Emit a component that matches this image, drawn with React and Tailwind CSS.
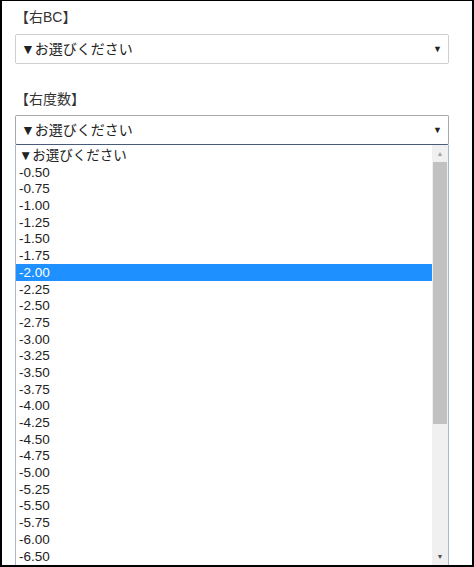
import React from 'react';

const options = [
  '▼お選びください',
  '-0.50', '-0.75', '-1.00', '-1.25', '-1.50', '-1.75', '-2.00', '-2.25', '-2.50',
  '-2.75', '-3.00', '-3.25', '-3.50', '-3.75', '-4.00', '-4.25', '-4.50', '-4.75',
  '-5.00', '-5.25', '-5.50', '-5.75', '-6.00', '-6.50',
];

const font = { fontFamily: '"Liberation Sans", "Noto Sans CJK JP", sans-serif' };

const SelectBox = ({ focused }) => (
  <div
    className={
      'flex h-[30px] items-center justify-between rounded-[2px] border bg-white pl-[5px] pr-[6px] text-[14px] text-[#222] ' +
      (focused ? 'border-[#a8a8a8] border-b-[#4a5a7a]' : 'border-[#cfcfcf]')
    }
  >
    <span>▼お選びください</span>
    <span className="text-[9px] leading-none">▼</span>
  </div>
);

export default function App() {
  return (
    <div className="h-[567px] w-[474px] overflow-hidden border-2 border-t border-black bg-white" style={font}>
      <div className="px-[13px] pt-[6px]">
        <div className="h-[20px] text-[14px] leading-[20px] text-[#333]">【右BC】</div>
        <div className="mt-[7px] w-[434px]">
          <SelectBox />
        </div>
        <div className="mt-[25px] h-[20px] text-[14px] leading-[20px] text-[#333]">【右度数】</div>
        <div className="mt-[6px] w-[434px]">
          <SelectBox focused />
          <div className="flex h-[430px] border-x border-[#a9b8cc] bg-white">
            <ul className="flex-1 pt-[2px]">
              {options.map((o) => (
                <li
                  key={o}
                  className={
                    'h-[16.7px] pl-[3px] text-[13.5px] leading-[17.5px] ' +
                    (o === '-2.00' ? 'bg-[#1e90ff] text-white' : 'text-[#222]')
                  }
                >
                  {o}
                </li>
              ))}
            </ul>
            <div className="flex w-[16px] flex-col bg-[#f0f0f0]">
              <div className="flex h-[17px] items-center justify-center text-[7px] leading-none text-[#a3a3a3]">▲</div>
              <div className="mx-[1px] h-[262px] bg-[#c1c1c1]" />
              <div className="flex-1" />
              <div className="mb-[10px] flex h-[17px] items-center justify-center text-[7px] leading-none text-[#505050]">▼</div>
            </div>
          </div>
        </div>
      </div>
    </div>
  );
}
